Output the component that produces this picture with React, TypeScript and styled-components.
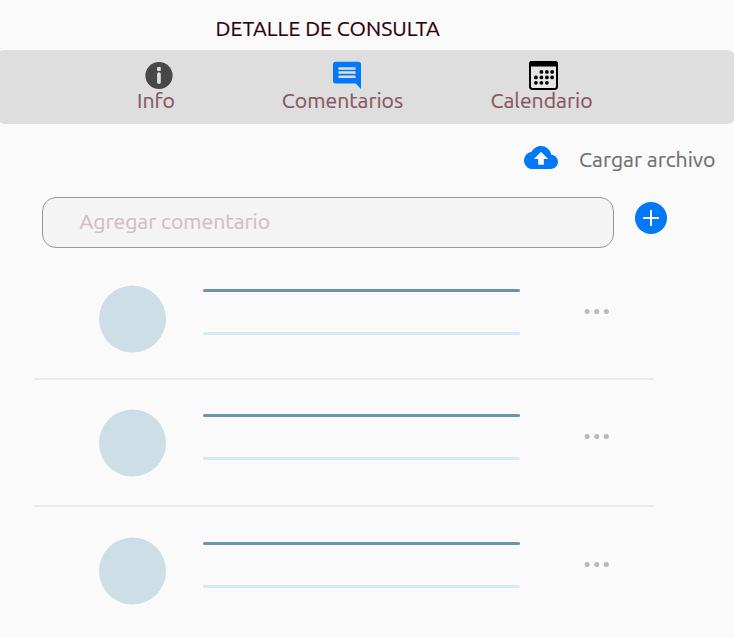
import React from "react";
import styled, { createGlobalStyle } from "styled-components";

const GlobalStyle = createGlobalStyle`
  * { box-sizing: border-box; }
  body {
    margin: 0;
    background: #fafafa;
    font-family: Ubuntu, "Noto Sans", sans-serif;
    overflow: hidden;
  }
  svg { display: block; flex: none; }
`;

const Page = styled.main`
  width: 734px;
  height: 638px;
  overflow: hidden;
  background: #fafafa;
`;

const Label = styled.span`
  display: block;
  font-size: 21.2px;
  line-height: 24px;
  white-space: nowrap;
  -webkit-text-stroke: 0.2px currentColor;
`;

const Header = styled.header`
  height: 50px;
  padding: 16px 0 0 215.6px;
  color: #2e000c;
`;

const Tabs = styled.nav`
  display: grid;
  grid-template-columns: 160px 213px 185px;
  column-gap: 0;
  height: 74px;
  margin: 0 -2px 0 -4px;
  padding-left: 80px;
  border-radius: 9px;
  background: #dedede;
`;

const Tab = styled.div<{ $shift: number }>`
  display: flex;
  flex-direction: column;
  align-items: center;
  padding-top: 10px;
  color: #88575f;

  svg { margin-left: ${(p) => p.$shift}px; }
  span { margin-top: -2px; }
`;

const Upload = styled.div`
  display: flex;
  align-items: center;
  height: 73px;
  padding-left: 524px;
  gap: 21px;
  color: #707070;

  svg { margin-top: -7px; }
  span { margin-top: -3px; }
`;

const Composer = styled.div`
  display: flex;
  align-items: center;
  height: 51px;
  padding-left: 42px;
  gap: 21px;

  svg { margin-top: -9px; }
`;

const Field = styled.div`
  display: flex;
  align-items: center;
  width: 572px;
  height: 51px;
  padding: 0 0 4px 36.5px;
  border: 1px solid #999;
  border-radius: 14px;
  background: #f4f4f4;
  color: #cfc0c3;
`;

const List = styled.section`
  width: 620px;
  margin: 7px 0 0 34px;
`;

const Row = styled.article<{ $height: number; $top: number }>`
  display: grid;
  grid-template-columns: 67px 317px 25px;
  column-gap: 37px;
  align-items: start;
  height: ${(p) => p.$height}px;
  padding: ${(p) => p.$top}px 0 0 65px;
  border-bottom: 2px solid #eaeaea;

  &:last-child { border-bottom: 0; }
`;

const Avatar = styled.div<{ $offset: number }>`
  width: 67px;
  height: 67px;
  margin-top: ${(p) => p.$offset}px;
  border-radius: 50%;
  background: #cddee6;
  transform: translateY(-0.5px);
`;

const Lines = styled.div`
  display: grid;
  row-gap: 40px;
`;

const Line = styled.div<{ $color: string }>`
  height: 3px;
  border-radius: 1.5px;
  background: ${(p) => p.$color};
`;

const DotsIcon = styled.svg`
  margin: 19px 0 0 27px;
`;

const InfoIcon = () => (
  <svg width="28" height="30" viewBox="0 0 28 30">
    <circle cx="14" cy="15.5" r="13.6" fill="#474747" />
    <rect x="12.1" y="7" width="3.7" height="3.9" rx=".7" fill="#dedede" />
    <rect x="12.1" y="12.2" width="3.7" height="11.8" rx="1.8" fill="#dedede" />
  </svg>
);

const CommentIcon = () => (
  <svg width="28" height="30" viewBox="0 0 28 30">
    <path d="M2.8 1.7h22.4A2.7 2.7 0 0 1 28 4.4v24.5l-5.4-5.4H2.8A2.7 2.7 0 0 1 0 20.8V4.4a2.7 2.7 0 0 1 2.8-2.7Z" fill="#0078f8" />
    <path d="M5.5 8.5h17M5.5 12.5h17M5.5 16.7h17" stroke="#dedede" strokeWidth="2.6" />
  </svg>
);

const calendarDots = [
  [14.4, 11.9], [19.9, 11.9], [25.1, 11.9],
  [8.9, 17.4], [14.4, 17.4], [19.9, 17.4], [25.1, 17.4],
  [8.9, 22.8], [14.4, 22.8], [19.9, 22.8],
];

const CalendarIcon = () => (
  <svg width="32" height="30" viewBox="0 0 32 30">
    <rect x="3" y="2" width="27" height="27" rx="2.4" fill="#e6e6e6" stroke="#000" strokeWidth="2" />
    <path d="M2 6.6V4a3 3 0 0 1 3-3h23a3 3 0 0 1 3 3v2.6Z" />
    {calendarDots.map(([x, y]) => (
      <circle key={`${x}-${y}`} cx={x} cy={y} r="1.9" />
    ))}
  </svg>
);

const CloudIcon = () => (
  <svg width="34" height="23" viewBox="0 4 24 16" preserveAspectRatio="none">
    <path d="M19.35 10.04A7.49 7.49 0 0 0 12 4C9.11 4 6.6 5.64 5.35 8.04A5.994 5.994 0 0 0 0 14c0 3.31 2.69 6 6 6h13c2.76 0 5-2.24 5-5 0-2.64-2.05-4.78-4.65-4.96ZM14 13v4h-4v-4H7l5-5 5 5h-3Z" fill="#0078f8" />
  </svg>
);

const PlusIcon = () => (
  <svg width="32" height="32" viewBox="0 0 32 32">
    <circle cx="16" cy="16" r="16" fill="#0078f8" />
    <path d="M16 8v16M8 16h16" stroke="#fff" strokeWidth="2" />
  </svg>
);

const MoreIcon = () => (
  <DotsIcon width="26" height="6" viewBox="0 0 26 6" fill="#b9b9b9">
    <circle cx="3.1" cy="3.4" r="2.5" />
    <circle cx="12.7" cy="3.4" r="2.5" />
    <circle cx="22.3" cy="3.4" r="2.5" />
  </DotsIcon>
);

const rows = [
  { height: 125, top: 34, avatar: -3 },
  { height: 127, top: 34, avatar: -4 },
  { height: 130, top: 35, avatar: -4 },
];

export default function App() {
  return (
    <Page>
      <GlobalStyle />
      <Header><Label>DETALLE DE CONSULTA</Label></Header>
      <Tabs>
        <Tab $shift={5}><InfoIcon /><Label>Info</Label></Tab>
        <Tab $shift={8}><CommentIcon /><Label>Comentarios</Label></Tab>
        <Tab $shift={3}><CalendarIcon /><Label>Calendario</Label></Tab>
      </Tabs>
      <Upload><CloudIcon /><Label>Cargar archivo</Label></Upload>
      <Composer>
        <Field><Label>Agregar comentario</Label></Field>
        <PlusIcon />
      </Composer>
      <List>
        {rows.map((row, index) => (
          <Row key={index} $height={row.height} $top={row.top}>
            <Avatar $offset={row.avatar} />
            <Lines>
              <Line $color="#6b93ae" />
              <Line $color={index === 0 ? "#d9e9f2" : "#dce8ef"} />
            </Lines>
            <MoreIcon />
          </Row>
        ))}
      </List>
    </Page>
  );
}
